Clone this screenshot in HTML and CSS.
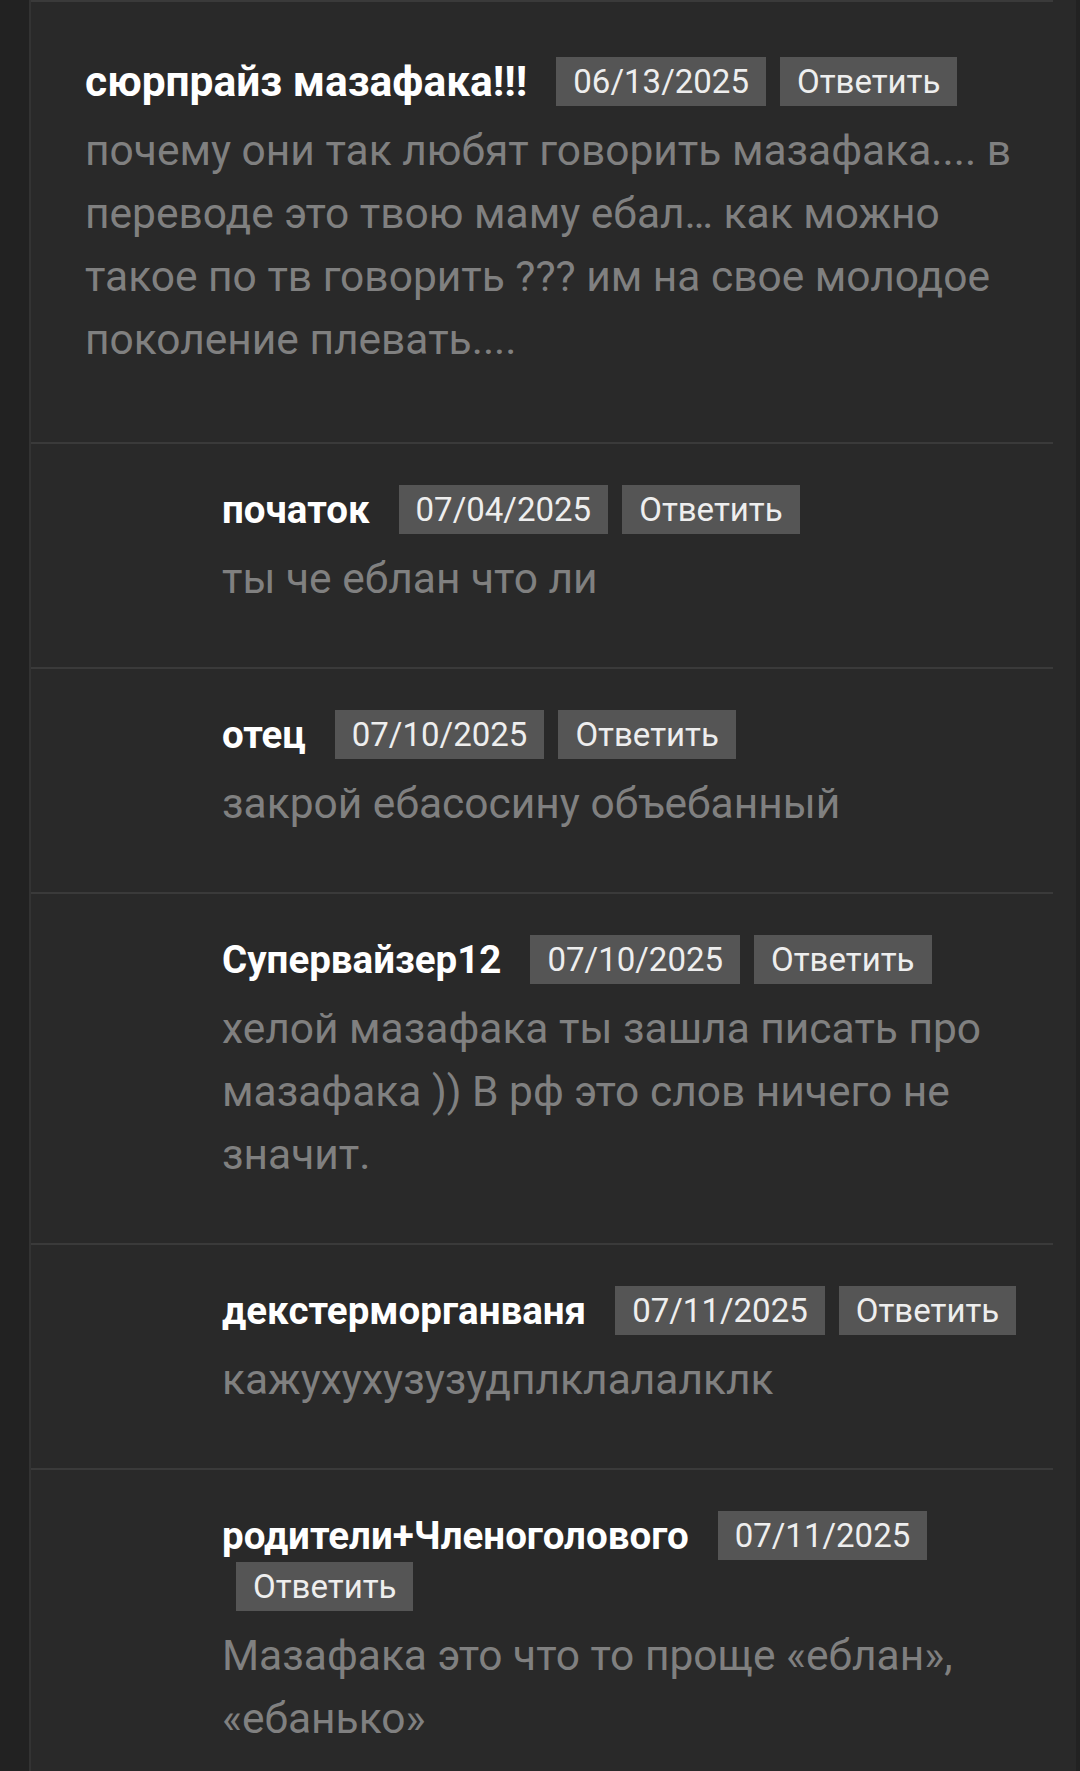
FILE: index.html
```html
<!DOCTYPE html>
<html lang="ru">
<head>
  <meta charset="UTF-8">
  <meta name="viewport" content="width=device-width, initial-scale=1.0">
  <title>Комментарии</title>
  <link rel="stylesheet" href="styles.css">
</head>
<body>
  <div class="comments">
    <div class="comment">
      <div class="comment-head">
        <span class="author">сюрпрайз мазафака!!!</span>
        <span class="date">06/13/2025</span>
        <button class="reply">Ответить</button>
      </div>
      <p class="text">почему они так любят говорить мазафака.... в переводе это твою маму ебал… как можно такое по тв говорить ??? им на свое молодое поколение плевать....</p>
    </div>

    <div class="comment child">
      <div class="comment-head">
        <span class="author">початок</span>
        <span class="date">07/04/2025</span>
        <button class="reply">Ответить</button>
      </div>
      <p class="text">ты че еблан что ли</p>
    </div>

    <div class="comment child">
      <div class="comment-head">
        <span class="author">отец</span>
        <span class="date">07/10/2025</span>
        <button class="reply">Ответить</button>
      </div>
      <p class="text">закрой ебасосину объебанный</p>
    </div>

    <div class="comment child">
      <div class="comment-head">
        <span class="author">Супервайзер12</span>
        <span class="date">07/10/2025</span>
        <button class="reply">Ответить</button>
      </div>
      <p class="text">хелой мазафака ты зашла писать про мазафака )) В рф это слов ничего не значит.</p>
    </div>

    <div class="comment child">
      <div class="comment-head">
        <span class="author">декстерморганваня</span>
        <span class="date">07/11/2025</span>
        <button class="reply">Ответить</button>
      </div>
      <p class="text">кажухухузузудплклалалклк</p>
    </div>

    <div class="comment child">
      <div class="comment-head">
        <span class="author">родители+Членоголового</span>
        <span class="date">07/11/2025</span>
        <button class="reply">Ответить</button>
      </div>
      <p class="text">Мазафака это что то проще «еблан», «ебанько»</p>
    </div>
  </div>
</body>
</html>
```

FILE: styles.css
```css
:root {
  --bg-dark: #222222;
  --bg-main: #292929;
  --line: #3a3a3a;
  --chip: #555555;
  --text-muted: #808080;
}

body {
  margin: 0;
  padding: 0;
  background-color: var(--bg-dark);
  font-family: Roboto, "Noto Sans", sans-serif;
  color: #ffffff;
}

.comments {
  margin-left: 29px;
  margin-right: 4px;
  min-height: 100vh;
  padding-right: 23px;
  background-color: var(--bg-main);
  border-left: 2px solid #333333;
}

.comment {
  padding: 41px 30px 57px 54px;
  border-bottom: 2px solid var(--line);
}

.comment:first-child {
  padding-top: 55px;
  padding-bottom: 71px;
  border-top: 2px solid var(--line);
}

.comment.child {
  padding-left: 191px;
}

.comment-head {
  display: flex;
  flex-wrap: wrap;
  align-items: center;
  row-gap: 2px;
}

.author {
  font-size: 42.5px;
  line-height: 49px;
  font-weight: bold;
  margin-right: 15px;
}

.child .author {
  font-size: 38.5px;
}

.date,
.reply {
  margin-left: 14px;
  padding: 4px 17px;
  font-family: inherit;
  font-size: 33px;
  line-height: 41px;
  color: #eeeeee;
  background-color: var(--chip);
  border: none;
  border-radius: 0;
}

.reply {
  cursor: pointer;
}

.text {
  margin: 13px 0 0;
  font-size: 42.5px;
  line-height: 63px;
  color: var(--text-muted);
}
```
